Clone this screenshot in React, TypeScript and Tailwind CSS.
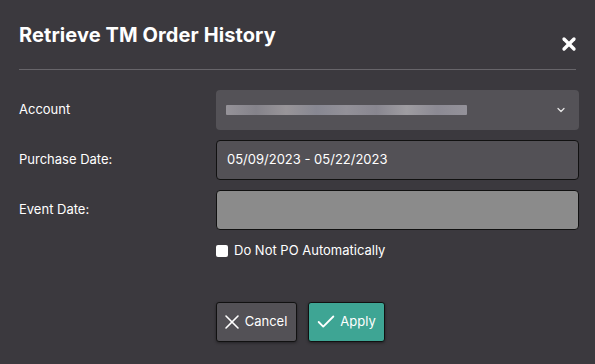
import { X, Check, ChevronDown } from 'lucide-react';

export default function App() {
  return (
    <div className="h-[364px] w-[595px] bg-[#3b393e] font-['Inter',sans-serif] text-white">
      <div className="flex items-end justify-between px-[19px] pt-[23px]">
        <h1 className="text-[20px] font-bold leading-[25px] tracking-[0.1px]">Retrieve TM Order History</h1>
        <X size={20} strokeWidth={4} className="mb-[-6px] mr-[-3px]" />
      </div>
      <div className="mx-[19px] mt-[21px] h-px bg-[#67656a]" />

      <div className="mt-[20px] flex flex-col gap-[10px] pl-[19px] pr-[16px]">
        <div className="flex items-center">
          <span className="w-[197px] text-[13px]">Account</span>
          <div className="flex h-[40px] flex-1 items-center justify-between rounded-[4px] bg-[#545257] pl-[10px] pr-[12px]">
            <div className="h-[10px] w-[241px] rounded-[1px] bg-[linear-gradient(90deg,#9d9aa0,#8a8890,#a09ca0,#8d8d98,#9a98a0,#8e8c96,#a7a5aa,#92909a,#9b99a1)] opacity-90" />
            <ChevronDown size={12} strokeWidth={2.5} className="text-[#e6e6e6]" />
          </div>
        </div>
        <div className="flex items-center">
          <span className="w-[197px] text-[13px]">Purchase Date:</span>
          <div className="flex h-[40px] flex-1 items-center rounded-[4px] border border-[#111] bg-[#535156] px-[10px] text-[13px]">
            05/09/2023 - 05/22/2023
          </div>
        </div>
        <div className="flex items-center">
          <span className="w-[197px] text-[13px]">Event Date:</span>
          <div className="h-[40px] flex-1 rounded-[4px] border border-[#111] bg-[#8b8b8b]" />
        </div>
      </div>

      <label className="ml-[216px] mt-[11px] flex items-center gap-[6px] text-[13px]">
        <span className="h-[12px] w-[12px] rounded-[2px] bg-white" />
        Do Not PO Automatically
      </label>

      <div className="ml-[216px] mt-[41px] flex gap-[11px]">
        <button className="flex h-[40px] w-[81px] items-center justify-center gap-[1px] rounded-[3px] border border-[#111] bg-[#535156] pr-[2px] text-[13px] text-white shadow-[0_1px_3px_rgba(0,0,0,0.4)]">
          <X size={24} strokeWidth={1.6} className="-ml-[4px]" />
          Cancel
        </button>
        <button className="flex h-[40px] w-[77px] items-center justify-center gap-[3px] rounded-[3px] border border-[#111] bg-[#3ea594] text-[13px] text-white shadow-[0_1px_3px_rgba(0,0,0,0.4)]">
          <Check size={22} strokeWidth={2} className="-ml-[2px]" />
          Apply
        </button>
      </div>
    </div>
  );
}
